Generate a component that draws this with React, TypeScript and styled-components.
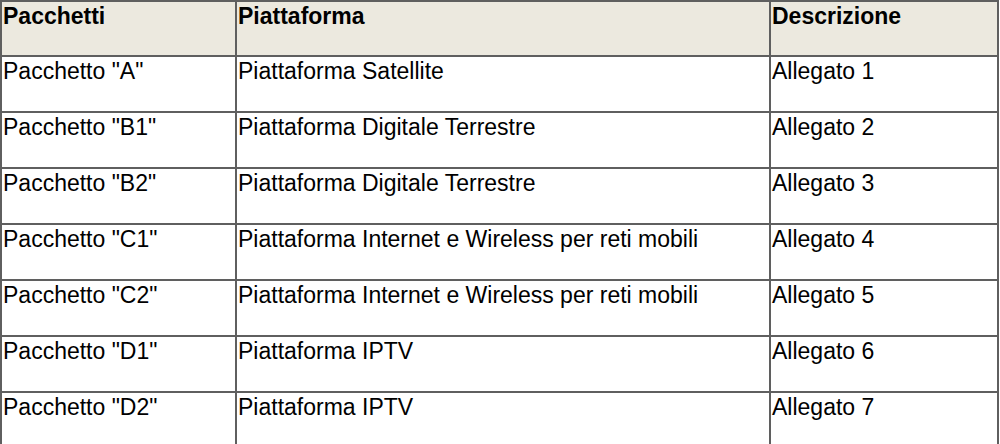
import styled, { createGlobalStyle } from "styled-components";

const GlobalStyle = createGlobalStyle`
  html, body {
    margin: 0;
    padding: 0;
    background: #ffffff;
  }
`;

const rows = [
  { pack: 'Pacchetto "A"', platform: "Piattaforma Satellite", desc: "Allegato 1" },
  { pack: 'Pacchetto "B1"', platform: "Piattaforma Digitale Terrestre", desc: "Allegato 2" },
  { pack: 'Pacchetto "B2"', platform: "Piattaforma Digitale Terrestre", desc: "Allegato 3" },
  { pack: 'Pacchetto "C1"', platform: "Piattaforma Internet e Wireless per reti mobili", desc: "Allegato 4" },
  { pack: 'Pacchetto "C2"', platform: "Piattaforma Internet e Wireless per reti mobili", desc: "Allegato 5" },
  { pack: 'Pacchetto "D1"', platform: "Piattaforma IPTV", desc: "Allegato 6" },
  { pack: 'Pacchetto "D2"', platform: "Piattaforma IPTV", desc: "Allegato 7" },
];

export default function App() {
  return (
    <>
      <GlobalStyle />
      <Table>
        <colgroup>
          <Col $w={235} />
          <Col $w={534} />
          <Col $w={228} />
        </colgroup>
        <thead>
          <tr>
            <HeadCell>Pacchetti</HeadCell>
            <HeadCell>Piattaforma</HeadCell>
            <HeadCell>Descrizione</HeadCell>
          </tr>
        </thead>
        <tbody>
          {rows.map((r) => (
            <tr key={r.pack}>
              <Cell>{r.pack}</Cell>
              <Cell>{r.platform}</Cell>
              <Cell>{r.desc}</Cell>
            </tr>
          ))}
        </tbody>
      </Table>
    </>
  );
}

const Table = styled.table`
  border-collapse: collapse;
  table-layout: fixed;
  width: 997px;
  margin: 0;
  font-family: "Liberation Sans", Arial, sans-serif;
  font-size: 23px;
  color: #000;
`;

const Col = styled.col<{ $w: number }>`
  width: ${(p) => p.$w}px;
`;

const Cell = styled.td`
  border: 2px solid #5f5f5f;
  height: 56px;
  padding: 1px 1px 0 1px;
  vertical-align: top;
  white-space: nowrap;
  box-sizing: border-box;
`;

const HeadCell = styled(Cell).attrs({ as: "th" })`
  background: #ece9df;
  font-weight: bold;
  text-align: left;
  height: 55px;
  padding-top: 1px;
`;
